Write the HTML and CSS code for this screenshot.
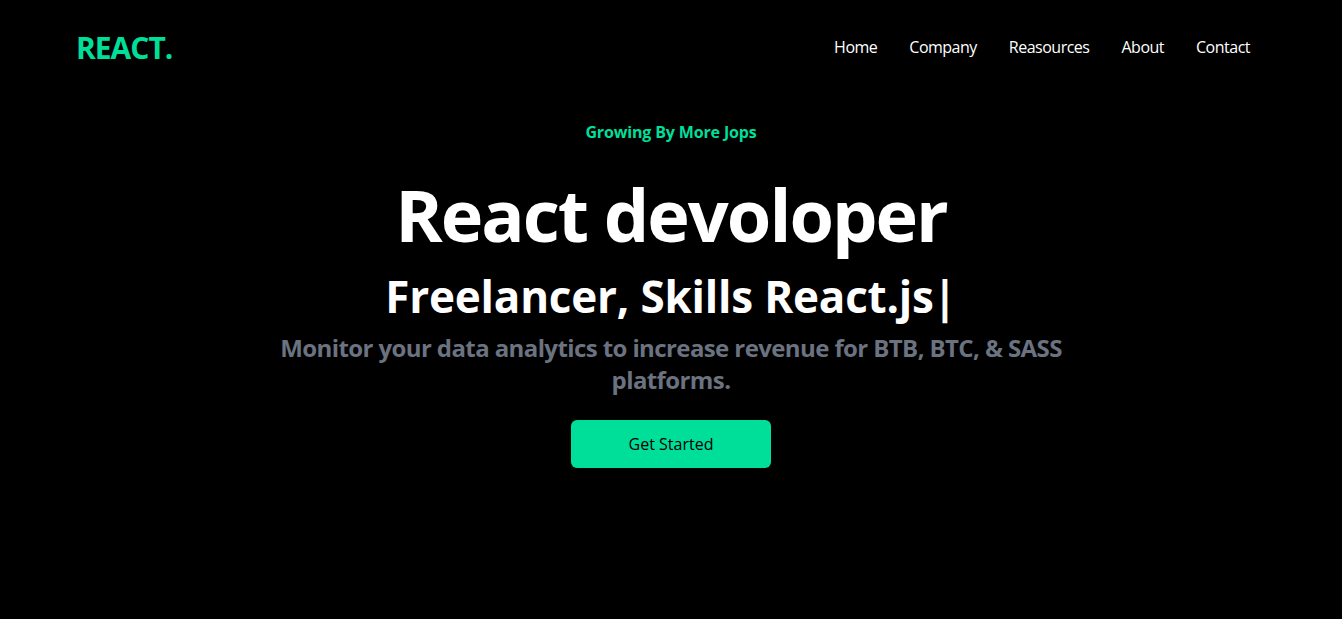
FILE: index.html
```html
<!DOCTYPE html>
<html lang="en">
<head>
<meta charset="utf-8">
<title>React developer</title>
<link rel="stylesheet" href="styles.css">
</head>
<body>
<header class="nav">
  <h1 class="logo">REACT.</h1>
  <ul class="menu">
    <li>Home</li>
    <li>Company</li>
    <li>Reasources</li>
    <li>About</li>
    <li>Contact</li>
  </ul>
</header>
<main class="hero">
  <p class="tag">Growing By More Jops</p>
  <h2 class="title">React devoloper</h2>
  <div class="typed-row">
    <p class="typed">Freelancer, Skills React.js<span class="cursor">|</span></p>
  </div>
  <p class="sub">Monitor your data analytics to increase revenue for BTB, BTC, &amp; SASS platforms.</p>
  <button class="cta">Get Started</button>
</main>
</body>
</html>
```

FILE: styles.css
```css
* { box-sizing: border-box; }
body {
  margin: 0;
  background: #000;
  color: #fff;
  font-family: "Open Sans", "Noto Sans", sans-serif;
}
.nav {
  display: flex;
  justify-content: space-between;
  align-items: center;
  height: 96px;
  padding: 0 76px;
}
.logo {
  margin: 0;
  font-size: 30px;
  line-height: 36px;
  font-weight: 700;
  letter-spacing: -1px;
  color: #00df9a;
}
.menu {
  display: flex;
  list-style: none;
  margin: 0;
  padding: 0;
}
.menu li {
  padding: 15px 16px 17px;
  font-size: 16px;
  line-height: 22px;
  letter-spacing: -0.5px;
}
.hero {
  max-width: 800px;
  margin: 0 auto;
  padding-top: 16px;
  display: flex;
  flex-direction: column;
  align-items: center;
  text-align: center;
}
.tag {
  margin: 0;
  padding: 8px;
  font-size: 16px;
  line-height: 24px;
  font-weight: 700;
  letter-spacing: -0.15px;
  color: #00df9a;
}
.title {
  margin: 26px 0 0;
  font-size: 72px;
  line-height: 72px;
  font-weight: 700;
  letter-spacing: -2px;
}
.typed-row {
  display: flex;
  justify-content: center;
  margin-top: 24px;
}
.typed {
  margin: 0;
  font-size: 44px;
  line-height: 44px;
  font-weight: 700;
  letter-spacing: -0.2px;
}
.cursor {
  font-weight: 700;
  margin-left: -1px;
}
.sub {
  margin: 14px 0 0;
  font-size: 24px;
  line-height: 32px;
  font-weight: 700;
  letter-spacing: -0.6px;
  color: #6b7280;
}
.cta {
  margin-top: 24px;
  width: 200px;
  padding: 12px 0;
  border: none;
  border-radius: 6px;
  background: #00df9a;
  color: #000;
  font-family: inherit;
  font-size: 16px;
  line-height: 24px;
  font-weight: 500;
}
```
